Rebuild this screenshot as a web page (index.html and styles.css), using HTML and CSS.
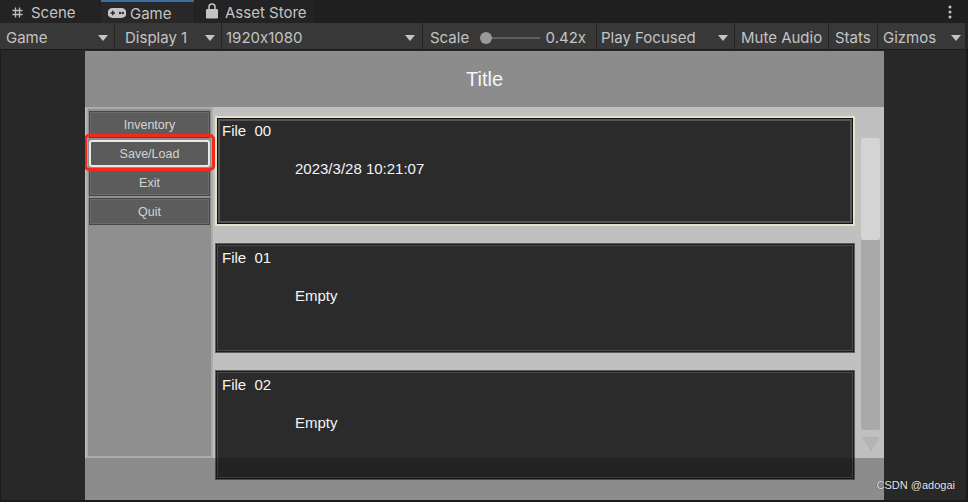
FILE: index.html
```html
<!DOCTYPE html>
<html>
<head>
    <link rel="stylesheet" href="styles.css">
</head>
<body>
    <div class="tabs">
        <div class="tab tab-scene">
            <svg width="11" height="11" viewBox="0 0 11 11"><path d="M3.5 0.5v10M7.5 0.5v10M0.5 3.5h10M0.5 7.5h10" stroke="#bcbcbc" stroke-width="1.3" fill="none"/></svg>
            <span>Scene</span>
        </div>
        <div class="tab tab-game active">
            <svg width="18" height="10" viewBox="0 0 18 10"><path d="M4.5 0h9a4.5 4.5 0 0 1 0 10h-9a4.5 4.5 0 0 1 0-10z" fill="#c4c4c4"/><path d="M2.5 5h4.5M4.75 2.8v4.4" stroke="#2a2a2a" stroke-width="1.4"/><circle cx="12" cy="5" r="1.2" fill="#2a2a2a"/><circle cx="14.8" cy="5" r="1.2" fill="#2a2a2a"/></svg>
            <span>Game</span>
        </div>
        <div class="tab tab-store">
            <svg width="14" height="16" viewBox="0 0 14 16"><path d="M4 6.5V4a3 3 0 0 1 6 0v2.5" stroke="#c4c4c4" stroke-width="1.5" fill="none"/><rect x="1" y="6" width="12" height="9.5" rx="1.2" fill="#c4c4c4"/></svg>
            <span>Asset Store</span>
        </div>
        <div class="tab-menu">
            <svg width="4" height="14" viewBox="0 0 4 14"><circle cx="2" cy="2" r="1.5" fill="#c4c4c4"/><circle cx="2" cy="7" r="1.5" fill="#c4c4c4"/><circle cx="2" cy="12" r="1.5" fill="#c4c4c4"/></svg>
        </div>
    </div>

    <div class="toolbar">
        <div class="tool tool-game"><span>Game</span><i class="caret"></i></div>
        <div class="tool tool-display"><span>Display 1</span><i class="caret"></i></div>
        <div class="tool tool-res"><span>1920x1080</span><i class="caret"></i></div>
        <div class="tool tool-scale">
            <span>Scale</span>
            <div class="slider"><i class="knob"></i><i class="rail"></i></div>
            <span>0.42x</span>
        </div>
        <div class="tool tool-play"><span>Play Focused</span><i class="caret"></i></div>
        <div class="tool tool-mute"><span>Mute Audio</span></div>
        <div class="tool tool-stats"><span>Stats</span></div>
        <div class="tool tool-gizmos"><span>Gizmos</span><i class="split"></i><i class="caret"></i></div>
    </div>

    <div class="stage">
        <div class="game">
            <div class="game-title">Title</div>
            <div class="game-body">
                <div class="menu">
                    <button>Inventory</button>
                    <button class="current">Save/Load</button>
                    <button>Exit</button>
                    <button>Quit</button>
                </div>
                <div class="saves">
                    <div class="save-list">
                        <div class="slot selected">
                            <div class="slot-name">File  00</div>
                            <div class="slot-info">2023/3/28 10:21:07</div>
                        </div>
                        <div class="slot">
                            <div class="slot-name">File  01</div>
                            <div class="slot-info">Empty</div>
                        </div>
                        <div class="slot">
                            <div class="slot-name">File  02</div>
                            <div class="slot-info">Empty</div>
                        </div>
                    </div>
                    <div class="scrollbar">
                        <div class="track"><div class="thumb"></div></div>
                        <div class="scroll-down"></div>
                    </div>
                </div>
            </div>
            <div class="game-footer"></div>
        </div>
    </div>

    <div class="watermark">CSDN @adogai</div>
</body>
</html>
```

FILE: styles.css
```css
* {
    box-sizing: border-box;
}
body {
    margin: 0;
    width: 968px;
    height: 502px;
    overflow: hidden;
    position: relative;
    background-color: #282828;
    font-family: Inter, "Noto Sans", sans-serif;
    font-feature-settings: "calt" 0;
    color: #c4c4c4;
}

/* editor tabs */
.tabs {
    display: flex;
    height: 23px;
    background-color: #1f1f1f;
}
.tab {
    display: flex;
    align-items: center;
    gap: 8px;
    height: 23px;
    padding-top: 1px;
    font-size: 15px;
    white-space: nowrap;
    background-color: #232323;
}
.tab-scene {
    width: 100px;
    padding-left: 12px;
}
.tab-game {
    width: 93px;
    margin-left: 1px;
    padding-left: 7px;
    gap: 4px;
    background-color: #282828;
    border-top: 2px solid #3a6ea5;
}
.tab-store {
    width: 118px;
    margin-left: 1px;
    padding-left: 10px;
    gap: 6px;
}
.tab-store svg {
    margin-top: -2px;
}
.tab-menu {
    margin-left: auto;
    margin-right: 16px;
    display: flex;
    align-items: center;
}

/* game view toolbar */
.toolbar {
    display: flex;
    height: 27px;
    background-color: #242424;
    border-bottom: 1px solid #1b1b1b;
    font-size: 15px;
    white-space: nowrap;
}
.tool {
    display: flex;
    align-items: center;
    justify-content: space-between;
    height: 26px;
    padding: 3px 6px 0 5px;
    background-color: #383838;
    margin-right: 1px;
}
.tool-game { width: 114px; padding-left: 6px; }
.tool-display { width: 106px; padding-left: 10px; }
.tool-res { width: 200px; padding-left: 4px; padding-right: 7px; }
.tool-scale { width: 173px; padding-left: 7px; padding-right: 10px; }
.tool-play { width: 137px; padding-left: 4px; }
.tool-mute { width: 93px; padding-left: 6px; }
.tool-stats { width: 48px; padding-left: 6px; }
.tool-gizmos { width: 87px; padding-left: 5px; justify-content: flex-start; }

.caret {
    width: 0;
    height: 0;
    border-left: 5px solid transparent;
    border-right: 5px solid transparent;
    border-top: 6px solid #c4c4c4;
}
.split {
    width: 1px;
    height: 15px;
    background-color: #242424;
    margin: 0 5px 0 10px;
}
.slider {
    display: flex;
    align-items: center;
    width: 60px;
    margin-left: 6px;
}
.knob {
    width: 12px;
    height: 12px;
    border-radius: 50%;
    background-color: #999;
}
.rail {
    flex: 1;
    height: 2px;
    background-color: #5e5e5e;
}

/* game view */
.stage {
    height: 452px;
    padding: 1px 0 0 84px;
    border-left: 1px solid #1c1c1c;
    border-right: 2px solid #1b1b1b;
    border-bottom: 2px solid #1a1a1a;
}
.game {
    position: relative;
    width: 799px;
    height: 449px;
    overflow: hidden;
    background-color: #b0b0b0;
    font-family: "Liberation Sans", Arial, sans-serif;
}
.game-title {
    height: 56px;
    line-height: 56px;
    text-align: center;
    font-size: 20px;
    color: #f6f6f6;
    background-color: #8c8c8c;
}
.game-body {
    display: flex;
    height: 351px;
    background-color: #c0c0c0;
}

.menu {
    width: 127px;
    margin-left: 1px;
    padding: 2px 1px 0;
    border: 2px solid #acacac;
    background-color: #8f8f8f;
}
.menu button {
    display: block;
    width: 121px;
    height: 27px;
    margin: 0 0 2px;
    padding: 0;
    background-color: #5c5c5c;
    border: 1px solid #474747;
    box-shadow: inset 0 0 0 1px #6a6a6a;
    color: #d4d4d4;
    font-family: "Liberation Sans", Arial, sans-serif;
    font-size: 12.5px;
}
.menu button.current {
    position: relative;
    border: 2px solid #e8e8e8;
    border-radius: 3px;
    box-shadow: none;
    background-color: #5a5a5a;
}
.menu button.current::after {
    content: "";
    position: absolute;
    left: -7px;
    right: -7px;
    top: -8px;
    bottom: -6px;
    border: 3px solid #f4291b;
    border-radius: 5px;
}

.saves {
    display: flex;
}
.save-list {
    width: 640px;
    margin-left: 2px;
    padding-top: 9px;
}
.slot {
    height: 110px;
    margin-bottom: 17px;
    padding: 5px 0 0 6px;
    background-color: #2b2b2b;
    border: 1px solid #5e5e5e;
    box-shadow: inset 0 0 0 1px #1c1c1c, inset 0 0 0 2px #4a4a4a;
    color: #f4f4f4;
    font-size: 15px;
}
.slot.selected {
    border: 2px solid #e2e2c6;
    padding: 4px 0 0 5px;
    box-shadow: inset 0 0 0 1px #141414, inset 0 0 0 3px #555;
}
.slot-name {
    white-space: pre;
}
.slot-info {
    margin: 21px 0 0 73px;
}

.scrollbar {
    width: 19px;
    margin-left: 6px;
    padding-top: 31px;
}
.track {
    height: 292px;
    background-color: #a9a9a9;
    border-radius: 2px;
}
.thumb {
    height: 102px;
    background-color: #d4d4d4;
    border-radius: 2px;
}
.scroll-down {
    width: 0;
    height: 0;
    margin: 7px 0 0 1px;
    border-left: 9px solid transparent;
    border-right: 9px solid transparent;
    border-top: 15px solid #b3b3b3;
}

.game-footer {
    position: absolute;
    left: 0;
    right: 0;
    bottom: 0;
    height: 42px;
    background-color: rgba(0, 0, 0, 0.2);
}

.watermark {
    position: absolute;
    right: 13px;
    bottom: 11px;
    font-family: "Liberation Sans", Arial, sans-serif;
    font-size: 11px;
    color: #e8e8e8;
    text-shadow: 0 0 1px #000;
}
```
